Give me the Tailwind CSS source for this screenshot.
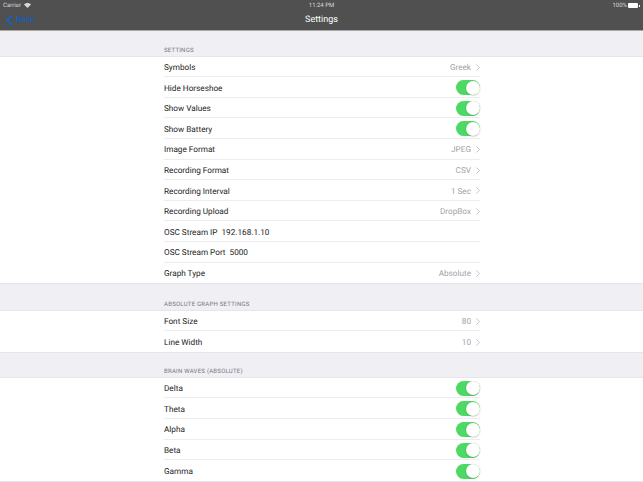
<!DOCTYPE html>
<html lang="en">
<head>
    <meta charset="UTF-8">
    <title>Settings</title>
    <script src="https://cdn.jsdelivr.net/npm/@tailwindcss/browser@4"></script>
</head>
<body class="bg-[#efeff4] font-['Roboto','Liberation_Sans',sans-serif] text-[#222] overflow-hidden [text-rendering:geometricPrecision]">
<div class="w-[643px] h-[482px] overflow-hidden flex flex-col">
    <!-- Status + nav bar -->
    <div class="h-[31px] bg-[#505050] border-b border-[#a8a8a8] text-white shrink-0">
        <div class="h-[11px] flex items-center justify-between px-[3px] text-[6px] text-[#d8d8d8]">
            <div class="flex items-center gap-[3px] w-[100px]">
                <span>Carrier</span>
                <svg width="7" height="5" viewBox="0 0 14 10"><path d="M7 10L0 3C4-1 10-1 14 3Z" fill="#d8d8d8"/></svg>
            </div>
            <span>11:24 PM</span>
            <div class="flex items-center justify-end gap-[1px] w-[100px]">
                <span>100%</span>
                <div class="w-[10px] h-[5px] bg-white rounded-[1px]"></div>
                <div class="w-[1px] h-[2px] bg-white"></div>
            </div>
        </div>
        <div class="h-[19px] pt-[1px] relative flex items-center justify-center text-[9px]">
            <div class="absolute left-[6px] top-[3px] flex items-center gap-[3px] text-[#0a60c8]">
                <svg width="7" height="11" viewBox="0 0 7 11"><path d="M6 .7L1 5.5L6 10.3" fill="none" stroke="#0a66d8" stroke-width="1.6"/></svg>
                <span class="text-[8.5px]">Back</span>
            </div>
            <span>Settings</span>
        </div>
    </div>

    <!-- Section: settings -->
    <div class="h-[25.6px] pl-[164px] flex items-end pb-[3px] text-[6px] leading-none tracking-[0.25px] text-[#77777c] shrink-0">SETTINGS</div>
    <div class="bg-white shadow-[0_0_0_0.5px_#dcdce0] pl-[164px] pr-[163px] shrink-0 text-[8.2px] [&_span]:translate-y-[1px]">
        <div class="h-[20.6px] pt-[1.5px] flex items-center justify-between border-b border-[#ededf0]">
            <span>Symbols</span>
            <div class="flex items-center gap-[5px] text-[#a3a3a7]"><span>Greek</span><svg width="4" height="7" viewBox="0 0 4 7"><path d="M.5.5L3.5 3.5L.5 6.5" fill="none" stroke="#b8b8bc" stroke-width=".8"/></svg></div>
        </div>
        <div class="h-[20.6px] pt-[1.5px] flex items-center justify-between border-b border-[#ededf0]">
            <span>Hide Horseshoe</span>
            <div class="w-[24.5px] h-[15px] rounded-full bg-[#4cd964] flex justify-end items-center pr-[0.5px]"><div class="w-[14px] h-[14px] rounded-full bg-white shadow-[0_0.5px_1.5px_rgba(0,0,0,.3)]"></div></div>
        </div>
        <div class="h-[20.6px] pt-[1.5px] flex items-center justify-between border-b border-[#ededf0]">
            <span>Show Values</span>
            <div class="w-[24.5px] h-[15px] rounded-full bg-[#4cd964] flex justify-end items-center pr-[0.5px]"><div class="w-[14px] h-[14px] rounded-full bg-white shadow-[0_0.5px_1.5px_rgba(0,0,0,.3)]"></div></div>
        </div>
        <div class="h-[20.6px] pt-[1.5px] flex items-center justify-between border-b border-[#ededf0]">
            <span>Show Battery</span>
            <div class="w-[24.5px] h-[15px] rounded-full bg-[#4cd964] flex justify-end items-center pr-[0.5px]"><div class="w-[14px] h-[14px] rounded-full bg-white shadow-[0_0.5px_1.5px_rgba(0,0,0,.3)]"></div></div>
        </div>
        <div class="h-[20.6px] pt-[1.5px] flex items-center justify-between border-b border-[#ededf0]">
            <span>Image Format</span>
            <div class="flex items-center gap-[5px] text-[#a3a3a7]"><span>JPEG</span><svg width="4" height="7" viewBox="0 0 4 7"><path d="M.5.5L3.5 3.5L.5 6.5" fill="none" stroke="#b8b8bc" stroke-width=".8"/></svg></div>
        </div>
        <div class="h-[20.6px] pt-[1.5px] flex items-center justify-between border-b border-[#ededf0]">
            <span>Recording Format</span>
            <div class="flex items-center gap-[5px] text-[#a3a3a7]"><span>CSV</span><svg width="4" height="7" viewBox="0 0 4 7"><path d="M.5.5L3.5 3.5L.5 6.5" fill="none" stroke="#b8b8bc" stroke-width=".8"/></svg></div>
        </div>
        <div class="h-[20.6px] pt-[1.5px] flex items-center justify-between border-b border-[#ededf0]">
            <span>Recording Interval</span>
            <div class="flex items-center gap-[5px] text-[#a3a3a7]"><span>1 Sec</span><svg width="4" height="7" viewBox="0 0 4 7"><path d="M.5.5L3.5 3.5L.5 6.5" fill="none" stroke="#b8b8bc" stroke-width=".8"/></svg></div>
        </div>
        <div class="h-[20.6px] pt-[1.5px] flex items-center justify-between border-b border-[#ededf0]">
            <span>Recording Upload</span>
            <div class="flex items-center gap-[5px] text-[#a3a3a7]"><span>DropBox</span><svg width="4" height="7" viewBox="0 0 4 7"><path d="M.5.5L3.5 3.5L.5 6.5" fill="none" stroke="#b8b8bc" stroke-width=".8"/></svg></div>
        </div>
        <div class="h-[20.6px] pt-[1.5px] flex items-center border-b border-[#ededf0] gap-[4px]">
            <span>OSC Stream IP</span><span>192.168.1.10</span>
        </div>
        <div class="h-[20.6px] pt-[1.5px] flex items-center border-b border-[#ededf0] gap-[4px]">
            <span>OSC Stream Port</span><span>5000</span>
        </div>
        <div class="h-[20.6px] pt-[1.5px] flex items-center justify-between">
            <span>Graph Type</span>
            <div class="flex items-center gap-[5px] text-[#a3a3a7]"><span>Absolute</span><svg width="4" height="7" viewBox="0 0 4 7"><path d="M.5.5L3.5 3.5L.5 6.5" fill="none" stroke="#b8b8bc" stroke-width=".8"/></svg></div>
        </div>
    </div>

    <!-- Section: absolute graph settings -->
    <div class="h-[27.4px] pl-[164px] flex items-end pb-[3px] text-[6px] leading-none tracking-[0.25px] text-[#77777c] shrink-0">ABSOLUTE GRAPH SETTINGS</div>
    <div class="bg-white shadow-[0_0_0_0.5px_#dcdce0] pl-[164px] pr-[163px] shrink-0 text-[8.2px] [&_span]:translate-y-[1px]">
        <div class="h-[20.6px] pt-[1.5px] flex items-center justify-between border-b border-[#ededf0]">
            <span>Font Size</span>
            <div class="flex items-center gap-[5px] text-[#a3a3a7]"><span>80</span><svg width="4" height="7" viewBox="0 0 4 7"><path d="M.5.5L3.5 3.5L.5 6.5" fill="none" stroke="#b8b8bc" stroke-width=".8"/></svg></div>
        </div>
        <div class="h-[20.6px] pt-[1.5px] flex items-center justify-between">
            <span>Line Width</span>
            <div class="flex items-center gap-[5px] text-[#a3a3a7]"><span>10</span><svg width="4" height="7" viewBox="0 0 4 7"><path d="M.5.5L3.5 3.5L.5 6.5" fill="none" stroke="#b8b8bc" stroke-width=".8"/></svg></div>
        </div>
    </div>

    <!-- Section: brain waves -->
    <div class="h-[26.1px] pl-[164px] flex items-end pb-[2.5px] text-[6px] leading-none tracking-[0.25px] text-[#77777c] shrink-0">BRAIN WAVES (ABSOLUTE)</div>
    <div class="bg-white shadow-[0_0_0_0.5px_#dcdce0] pl-[164px] pr-[163px] shrink-0 text-[8.2px] [&_span]:translate-y-[1px]">
        <div class="h-[20.6px] pt-[1.5px] flex items-center justify-between border-b border-[#ededf0]">
            <span>Delta</span>
            <div class="w-[24.5px] h-[15px] rounded-full bg-[#4cd964] flex justify-end items-center pr-[0.5px]"><div class="w-[14px] h-[14px] rounded-full bg-white shadow-[0_0.5px_1.5px_rgba(0,0,0,.3)]"></div></div>
        </div>
        <div class="h-[20.6px] pt-[1.5px] flex items-center justify-between border-b border-[#ededf0]">
            <span>Theta</span>
            <div class="w-[24.5px] h-[15px] rounded-full bg-[#4cd964] flex justify-end items-center pr-[0.5px]"><div class="w-[14px] h-[14px] rounded-full bg-white shadow-[0_0.5px_1.5px_rgba(0,0,0,.3)]"></div></div>
        </div>
        <div class="h-[20.6px] pt-[1.5px] flex items-center justify-between border-b border-[#ededf0]">
            <span>Alpha</span>
            <div class="w-[24.5px] h-[15px] rounded-full bg-[#4cd964] flex justify-end items-center pr-[0.5px]"><div class="w-[14px] h-[14px] rounded-full bg-white shadow-[0_0.5px_1.5px_rgba(0,0,0,.3)]"></div></div>
        </div>
        <div class="h-[20.6px] pt-[1.5px] flex items-center justify-between border-b border-[#ededf0]">
            <span>Beta</span>
            <div class="w-[24.5px] h-[15px] rounded-full bg-[#4cd964] flex justify-end items-center pr-[0.5px]"><div class="w-[14px] h-[14px] rounded-full bg-white shadow-[0_0.5px_1.5px_rgba(0,0,0,.3)]"></div></div>
        </div>
        <div class="h-[20.6px] pt-[1.5px] flex items-center justify-between">
            <span>Gamma</span>
            <div class="w-[24.5px] h-[15px] rounded-full bg-[#4cd964] flex justify-end items-center pr-[0.5px]"><div class="w-[14px] h-[14px] rounded-full bg-white shadow-[0_0.5px_1.5px_rgba(0,0,0,.3)]"></div></div>
        </div>
    </div>
</div>
</body>
</html>
